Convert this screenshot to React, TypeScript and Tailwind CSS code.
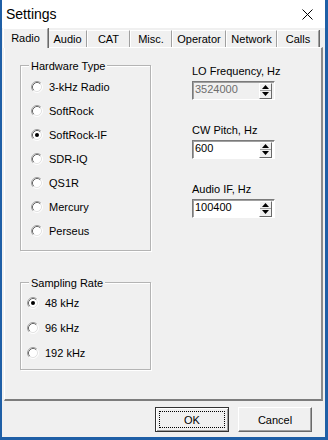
import type { ReactNode } from "react";

function RadioDot({ checked }: { checked?: boolean }) {
  return (
    <svg width="12" height="12" viewBox="0 0 12 12" className="shrink-0">
      <circle cx="6" cy="6" r="5" fill="#fff" />
      <path d="M2.11 9.89A5.5 5.5 0 0 1 9.89 2.11" fill="none" stroke="#a0a0a0" />
      <path d="M9.89 2.11A5.5 5.5 0 0 1 2.11 9.89" fill="none" stroke="#fff" />
      <path d="M2.82 9.18A4.5 4.5 0 0 1 9.18 2.82" fill="none" stroke="#696969" />
      <path d="M9.18 2.82A4.5 4.5 0 0 1 2.82 9.18" fill="none" stroke="#e3e3e3" />
      {checked && <circle cx="6" cy="6" r="2" fill="#000" />}
    </svg>
  );
}

function GroupBox({ title, className, children }: { title: string; className: string; children: ReactNode }) {
  return (
    <div className={`relative border border-[#b4b4b4] shadow-[1px_1px_0_#fff,inset_1px_1px_0_#fff] ${className}`}>
      <span className="absolute left-[8px] top-[-7px] bg-[#f0f0f0] px-[2px] leading-[14px]">{title}</span>
      {children}
    </div>
  );
}

function SpinField({ label, value, disabled }: { label: string; value: string; disabled?: boolean }) {
  return (
    <div className="flex flex-col">
      <span className="leading-[14px]">{label}</span>
      <div
        className={`mt-[3px] flex h-[19px] w-[83px] items-start justify-between border border-t-[#7a7a7a] border-l-[#7a7a7a] border-r-white border-b-white shadow-[inset_1px_1px_0_#a0a0a0] ${
          disabled ? "bg-[#f0f0f0] text-[#6d6d6d]" : "bg-white text-black"
        }`}
      >
        <span className="pl-[2px] pt-[1px] leading-[13px]">{value}</span>
        <div className="mr-[2px] mt-[1px] flex w-[13px] flex-col border border-t-white border-l-white border-r-[#696969] border-b-[#696969] bg-[#f0f0f0]">
          <div className="flex h-[7px] items-end justify-center border-b border-b-[#a0a0a0] pb-[1px]">
            <svg width="7" height="4" viewBox="0 0 7 4">
              <path d="M0 4L3.5 0L7 4Z" fill="#000" />
            </svg>
          </div>
          <div className="flex h-[7px] items-start justify-center pt-[1px]">
            <svg width="7" height="4" viewBox="0 0 7 4">
              <path d="M0 0L7 0L3.5 4Z" fill="#000" />
            </svg>
          </div>
        </div>
      </div>
    </div>
  );
}

const tabs = [
  { name: "Radio", w: "w-[45px]" },
  { name: "Audio", w: "w-[39px]" },
  { name: "CAT", w: "w-[43px]" },
  { name: "Misc.", w: "w-[42px]" },
  { name: "Operator", w: "w-[54px]" },
  { name: "Network", w: "w-[51px]" },
  { name: "Calls", w: "w-[42px]" },
];

const hardware = ["3-kHz Radio", "SoftRock", "SoftRock-IF", "SDR-IQ", "QS1R", "Mercury", "Perseus"];
const rates = ["48 kHz", "96 kHz", "192 kHz"];

export default function App() {
  return (
    <div className="flex h-[440px] w-[328px] flex-col bg-[#1f5fa6] pb-[3px] pl-[2px] pr-[3px] font-['Liberation_Sans',Arial,sans-serif] text-[11px] text-black">
      <div className="flex flex-1 flex-col bg-[#f0f0f0]">
        {/* title bar */}
        <div className="flex h-[28px] items-center justify-between bg-white pl-[4px] pr-[12px]">
          <span className="text-[14px] leading-[16px]">Settings</span>
          <svg width="11" height="11" viewBox="0 0 11 11">
            <path d="M0.5 0.5L10.5 10.5M10.5 0.5L0.5 10.5" stroke="#000" strokeWidth="1" />
          </svg>
        </div>

        {/* tabs */}
        <div className="ml-[1px] flex h-[19px] items-end">
          {tabs.map((t, i) =>
            i === 0 ? (
              <div
                key={t.name}
                className={`relative z-10 -mb-px flex h-[20px] ${t.w} items-start justify-center border-l border-t border-r border-l-white border-t-white border-r-[#a0a0a0] bg-[#f0f0f0] pt-[2px] leading-[14px] shadow-[1px_0_0_#696969]`}
              >
                {t.name}
              </div>
            ) : (
              <div
                key={t.name}
                className={`flex h-[17px] ${t.w} items-center justify-center border-l border-t border-r border-l-white border-t-white border-r-[#a0a0a0] leading-[14px] shadow-[1px_0_0_#696969]`}
              >
                {t.name}
              </div>
            )
          )}
        </div>

        {/* tab page */}
        <div className="mx-[2px] flex h-[354px] border-l border-t border-r-2 border-b-2 border-l-white border-t-white border-r-[#8c8c8c] border-b-[#7c7c7c] pl-[15px] pt-[16px]">
          <div className="mt-[1px] flex w-[131px] flex-col">
            <GroupBox title="Hardware Type" className="h-[186px] pl-[10px] pt-[9px]">
              {hardware.map((h) => (
                <div key={h} className="flex h-[24px] items-center gap-[6px]">
                  <RadioDot checked={h === "SoftRock-IF"} />
                  <span className="leading-[14px]">{h}</span>
                </div>
              ))}
            </GroupBox>
            <GroupBox title="Sampling Rate" className="mt-[31px] h-[88px] pl-[6px] pt-[7px]">
              {rates.map((r) => (
                <div key={r} className="flex h-[25px] items-center gap-[6px]">
                  <RadioDot checked={r === "48 kHz"} />
                  <span className="leading-[14px]">{r}</span>
                </div>
              ))}
            </GroupBox>
          </div>

          <div className="ml-[41px] flex flex-col gap-[23px]">
            <SpinField label="LO Frequency, Hz" value="3524000" disabled />
            <SpinField label="CW Pitch, Hz" value="600" />
            <SpinField label="Audio IF, Hz" value="100400" />
          </div>
        </div>

        {/* buttons */}
        <div className="flex flex-1 items-start justify-end gap-[9px] pr-[13px] pt-[6px]">
          <button className="flex h-[25px] w-[74px] items-center justify-center border border-[#333] bg-[#f0f0f0] p-[3px] shadow-[inset_1px_1px_0_#fff,inset_-1px_-1px_0_#a0a0a0]">
            <span className="flex h-full w-full items-center justify-center border border-dotted border-black leading-[14px]">
              OK
            </span>
          </button>
          <button className="flex h-[25px] w-[74px] items-center justify-center border border-t-white border-l-white border-r-[#696969] border-b-[#696969] bg-[#f0f0f0] leading-[14px] shadow-[inset_-1px_-1px_0_#a0a0a0]">
            Cancel
          </button>
        </div>
      </div>
    </div>
  );
}
